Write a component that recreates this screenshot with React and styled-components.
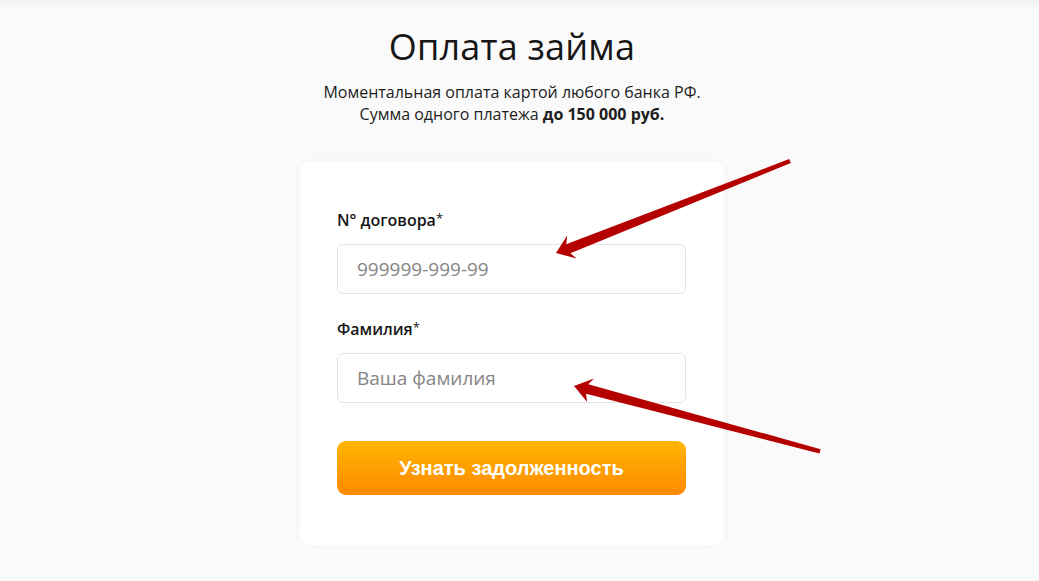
import React from 'react';
import styled, { createGlobalStyle } from 'styled-components';

const GlobalStyle = createGlobalStyle`
  html, body {
    margin: 0;
    padding: 0;
    background: #fafafa;
  }
  body {
    font-family: "Open Sans", "Liberation Sans", sans-serif;
    color: #1a1a1a;
  }
`;

const Page = styled.div`
  position: relative;
  min-height: 581px;
  background: #fafafa;
  overflow: hidden;
`;

const TopShade = styled.div`
  height: 12px;
  background: linear-gradient(#f2f2f2, #fafafa);
`;

const Main = styled.main`
  display: flex;
  flex-direction: column;
  align-items: center;
  padding-right: 15px;
`;

const Title = styled.h1`
  margin: 13px 0 0;
  font-size: 36px;
  line-height: 44px;
  font-weight: 400;
  color: #161616;
  letter-spacing: 0.2px;
`;

const Lead = styled.p`
  margin: 12px 0 0;
  font-size: 16px;
  line-height: 22px;
  text-align: center;
  color: #1d1d1d;

  b {
    font-weight: 700;
  }
`;

const Card = styled.form`
  margin-top: 36px;
  width: 424px;
  box-sizing: border-box;
  padding: 47px 38px 50px 37px;
  background: #fff;
  border-radius: 12px;
  box-shadow: 0 0 18px rgba(0, 0, 0, 0.025);
  display: flex;
  flex-direction: column;
`;

const Field = styled.label`
  display: flex;
  flex-direction: column;
  gap: 14px;
  margin-bottom: ${p => p.gapAfter}px;
`;

const Label = styled.span`
  font-size: 16px;
  line-height: 20px;
  font-weight: 600;
  color: #161616;

  sup {
    font-weight: 400;
    font-size: 13px;
    vertical-align: 3px;
  }
`;

const Input = styled.input`
  height: 50px;
  box-sizing: border-box;
  width: 100%;
  padding: 0 19px;
  border: 1px solid #e4e4e4;
  border-radius: 6px;
  font-family: "Open Sans", "Liberation Sans", sans-serif;
  font-size: 19px;
  color: #222;
  outline: none;

  &::placeholder {
    color: #858585;
  }
`;

const Submit = styled.button`
  height: 54px;
  border: 0;
  border-radius: 9px;
  background: linear-gradient(#ffb500, #ff8900);
  color: #fff;
  font-family: "Liberation Sans", Arial, sans-serif;
  font-weight: 700;
  font-size: 20px;
  cursor: pointer;
`;

const Overlay = styled.svg`
  position: absolute;
  left: 0;
  top: 0;
  pointer-events: none;
`;

export default function App() {
  return (
    <>
      <GlobalStyle />
      <Page>
        <TopShade />
        <Main>
          <Title>Оплата займа</Title>
          <Lead>
            Моментальная оплата картой любого банка РФ.
            <br />
            Сумма одного платежа <b>до 150 000 руб.</b>
          </Lead>
          <Card onSubmit={e => e.preventDefault()}>
            <Field gapAfter={23}>
              <Label>N° договора<sup>*</sup></Label>
              <Input placeholder="999999-999-99" />
            </Field>
            <Field gapAfter={38}>
              <Label>Фамилия<sup>*</sup></Label>
              <Input placeholder="Ваша фамилия" />
            </Field>
            <Submit type="submit">Узнать задолженность</Submit>
          </Card>
        </Main>
        <Overlay width="1039" height="581" viewBox="0 0 1039 581">
          <polygon
            fill="#b50000"
            points="556,253 576.5,258.5 570.4,253.2 790.8,163 789.2,159 566.2,244.2 567.2,235.6"
          />
          <polygon
            fill="#b50000"
            points="574,386 587.2,402 586,393.8 819.4,453.4 820.6,449.2 588.3,384.3 594,378.4"
          />
        </Overlay>
      </Page>
    </>
  );
}
